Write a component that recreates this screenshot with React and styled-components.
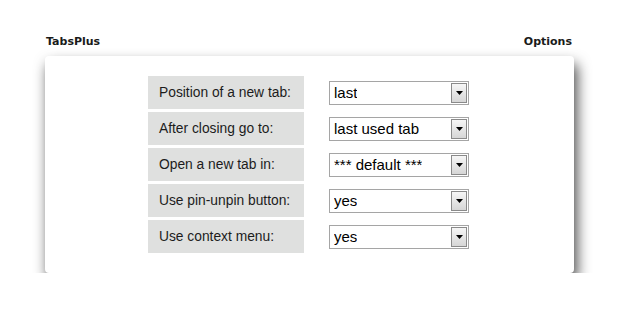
import React from 'react';
import styled, { createGlobalStyle } from 'styled-components';

const GlobalStyle = createGlobalStyle`
  html, body {
    margin: 0;
    padding: 0;
    background: #ffffff;
  }
`;

const options = [
  { label: 'Position of a new tab:', value: 'last' },
  { label: 'After closing go to:', value: 'last used tab' },
  { label: 'Open a new tab in:', value: '*** default ***' },
  { label: 'Use pin-unpin button:', value: 'yes' },
  { label: 'Use context menu:', value: 'yes' },
];

const App = () => {
  return (
    <Page>
      <GlobalStyle />
      <Header>
        <HeaderTitle>TabsPlus</HeaderTitle>
        <HeaderTitle>Options</HeaderTitle>
      </Header>
      <Card>
        <OptionList>
          {options.map((opt) => (
            <OptionRow key={opt.label}>
              <Label>{opt.label}</Label>
              <SelectCell>
                <SelectBox>
                  <SelectValue>{opt.value}</SelectValue>
                  <ArrowButton>
                    <svg width="7" height="4" viewBox="0 0 7 4">
                      <path d="M0 0 H7 L3.5 4 Z" fill="#000" />
                    </svg>
                  </ArrowButton>
                </SelectBox>
              </SelectCell>
            </OptionRow>
          ))}
        </OptionList>
      </Card>
    </Page>
  );
};

const Page = styled.div`
  width: 529px;
  margin-left: 45px;
  padding-top: 35px;
`;

const Header = styled.div`
  display: flex;
  justify-content: space-between;
  height: 21px;
  padding: 0 2px 0 1px;
`;

const HeaderTitle = styled.span`
  font-family: "DejaVu Sans", Verdana, sans-serif;
  font-weight: bold;
  font-size: 11px;
  line-height: 14px;
  color: #1a1a1a;
`;

const Card = styled.div`
  background: #ffffff;
  border-radius: 4px;
  box-shadow: 3px 8px 14px rgba(0, 0, 0, 0.72);
  padding: 20px 2px 20px 0;
  display: flex;
  justify-content: center;
`;

const OptionList = styled.div`
  display: flex;
  flex-direction: column;
  gap: 3px;
`;

const OptionRow = styled.div`
  display: flex;
  height: 33px;
`;

const Label = styled.div`
  width: 145px;
  padding-left: 11px;
  display: flex;
  align-items: center;
  background: #dfe0df;
  font-family: "Liberation Sans", Arial, sans-serif;
  font-size: 13.8px;
  color: #1c1c1c;
`;

const SelectCell = styled.div`
  display: flex;
  align-items: center;
  padding-left: 25px;
`;

const SelectBox = styled.div`
  width: 134px;
  height: 22px;
  border: 1px solid #a5a5a5;
  background: #ffffff;
  display: flex;
  align-items: center;
  justify-content: space-between;
  padding-left: 4px;
`;

const SelectValue = styled.span`
  font-family: "Liberation Sans", Arial, sans-serif;
  font-size: 15px;
  color: #000;
  white-space: nowrap;
  overflow: hidden;
`;

const ArrowButton = styled.div`
  width: 14px;
  height: 18px;
  margin-right: 1px;
  border: 1px solid #8a8a8a;
  background: linear-gradient(#f6f6f6, #d6d6d6);
  display: flex;
  align-items: center;
  justify-content: center;
  flex-shrink: 0;
`;

export default App;
